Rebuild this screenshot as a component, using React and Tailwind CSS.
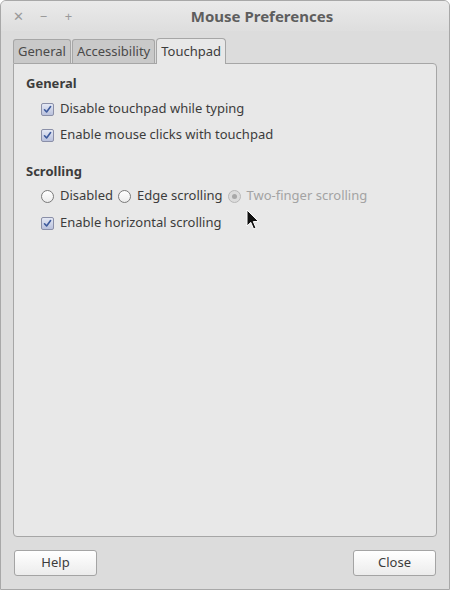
const font = { fontFamily: '"Noto Sans", "DejaVu Sans", sans-serif' };

function Check() {
  return (
    <span className="w-[13px] h-[13px] rounded-[2px] border border-[#8a8fa8] bg-gradient-to-b from-[#e4e8f4] to-[#b9c1dc] flex items-center justify-center shrink-0">
      <svg width="9" height="9" viewBox="0 0 9 9">
        <path d="M1.5 4.8 L3.6 7 L7.6 1.6" stroke="#3d5a9c" strokeWidth="1.6" fill="none" strokeLinecap="round" strokeLinejoin="round" />
      </svg>
    </span>
  );
}

function Radio({ on, disabled }) {
  return (
    <span
      className={
        "w-[13px] h-[13px] rounded-full border flex items-center justify-center shrink-0 " +
        (disabled ? "border-[#b8b8b8] bg-[#dcdcdc]" : "border-[#7a7a7a] bg-gradient-to-b from-white to-[#ececec]")
      }
    >
      {on && <span className="w-[5px] h-[5px] rounded-full bg-[#a8a8a8]" />}
    </span>
  );
}

function CheckRow({ children }) {
  return (
    <div className="flex items-center gap-[6px] h-[18px] pl-[15px]">
      <Check />
      <span>{children}</span>
    </div>
  );
}

export default function App() {
  return (
    <div
      className="w-[450px] h-[590px] bg-[#dcdcdc] border border-[#a8a8a8] rounded-t-[6px] flex flex-col text-[13px] text-[#3c3c3c] overflow-hidden relative"
      style={font}
    >
      {/* title bar */}
      <div className="h-[30px] flex items-center bg-gradient-to-b from-[#eaeaea] to-[#dedede] relative">
        <div className="flex items-center gap-[14px] pl-[12px] text-[#9a9a9a] text-[13px] leading-none">
          <span className="w-[11px] text-center">✕</span>
          <span className="w-[11px] text-center">−</span>
          <span className="w-[11px] text-center">+</span>
        </div>
        <div className="absolute left-0 right-0 top-0 h-[30px] flex items-center justify-center pl-[74px] font-bold text-[15px] text-[#5e5e5e]">
          Mouse Preferences
        </div>
      </div>

      {/* tabs */}
      <div className="flex items-end px-[12px] mt-[7px] h-[25px] gap-[1px]">
        <div className="h-[24px] px-[4px] flex items-center bg-[#c9c9c9] border border-[#a6a6a6] border-b-0 rounded-t-[3px] text-[#4a4a4a]">General</div>
        <div className="h-[24px] px-[4px] flex items-center bg-[#c9c9c9] border border-[#a6a6a6] border-b-0 rounded-t-[3px] text-[#4a4a4a]">Accessibility</div>
        <div className="h-[26px] px-[4px] flex items-center bg-[#e8e8e8] border border-[#a6a6a6] border-b-0 rounded-t-[4px] -mb-[1px] relative z-10 text-[#3c3c3c]">Touchpad</div>
      </div>

      {/* panel */}
      <div className="mx-[12px] h-[474px] bg-[#e8e8e8] border border-[#a6a6a6] rounded-b-[4px] rounded-tr-[4px] pt-[10px] pl-[12px]">
        <div className="font-bold h-[20px] flex items-center">General</div>
        <div className="flex flex-col gap-[8px] mt-[6px]">
          <CheckRow>Disable touchpad while typing</CheckRow>
          <CheckRow>Enable mouse clicks with touchpad</CheckRow>
        </div>
        <div className="font-bold h-[20px] flex items-center mt-[18px]">Scrolling</div>
        <div className="flex items-center h-[18px] pl-[15px] mt-[5px]">
          <Radio />
          <span className="ml-[6px] mr-[5px]">Disabled</span>
          <Radio />
          <span className="ml-[6px] mr-[5px]">Edge scrolling</span>
          <Radio on disabled />
          <span className="ml-[6px] text-[#a3a3a3]">Two-finger scrolling</span>
        </div>
        <div className="mt-[9px]">
          <CheckRow>Enable horizontal scrolling</CheckRow>
        </div>
      </div>

      {/* buttons */}
      <div className="flex justify-between px-[13px] mt-[13px]">
        <button className="w-[83px] h-[26px] rounded-[3px] border border-[#a4a4a4] bg-gradient-to-b from-white to-[#ececec] text-[#3c3c3c]">Help</button>
        <button className="w-[83px] h-[26px] rounded-[3px] border border-[#a4a4a4] bg-gradient-to-b from-white to-[#ececec] text-[#3c3c3c]">Close</button>
      </div>

      {/* mouse pointer */}
      <svg className="absolute left-[245px] top-[208px]" width="14" height="22" viewBox="0 0 14 22">
        <path d="M1 1 L1 17 L4.8 13.4 L7.6 20 L10 19 L7.3 12.6 L12.5 12.4 Z" fill="#111" stroke="#fff" strokeWidth="1" />
      </svg>
    </div>
  );
}
